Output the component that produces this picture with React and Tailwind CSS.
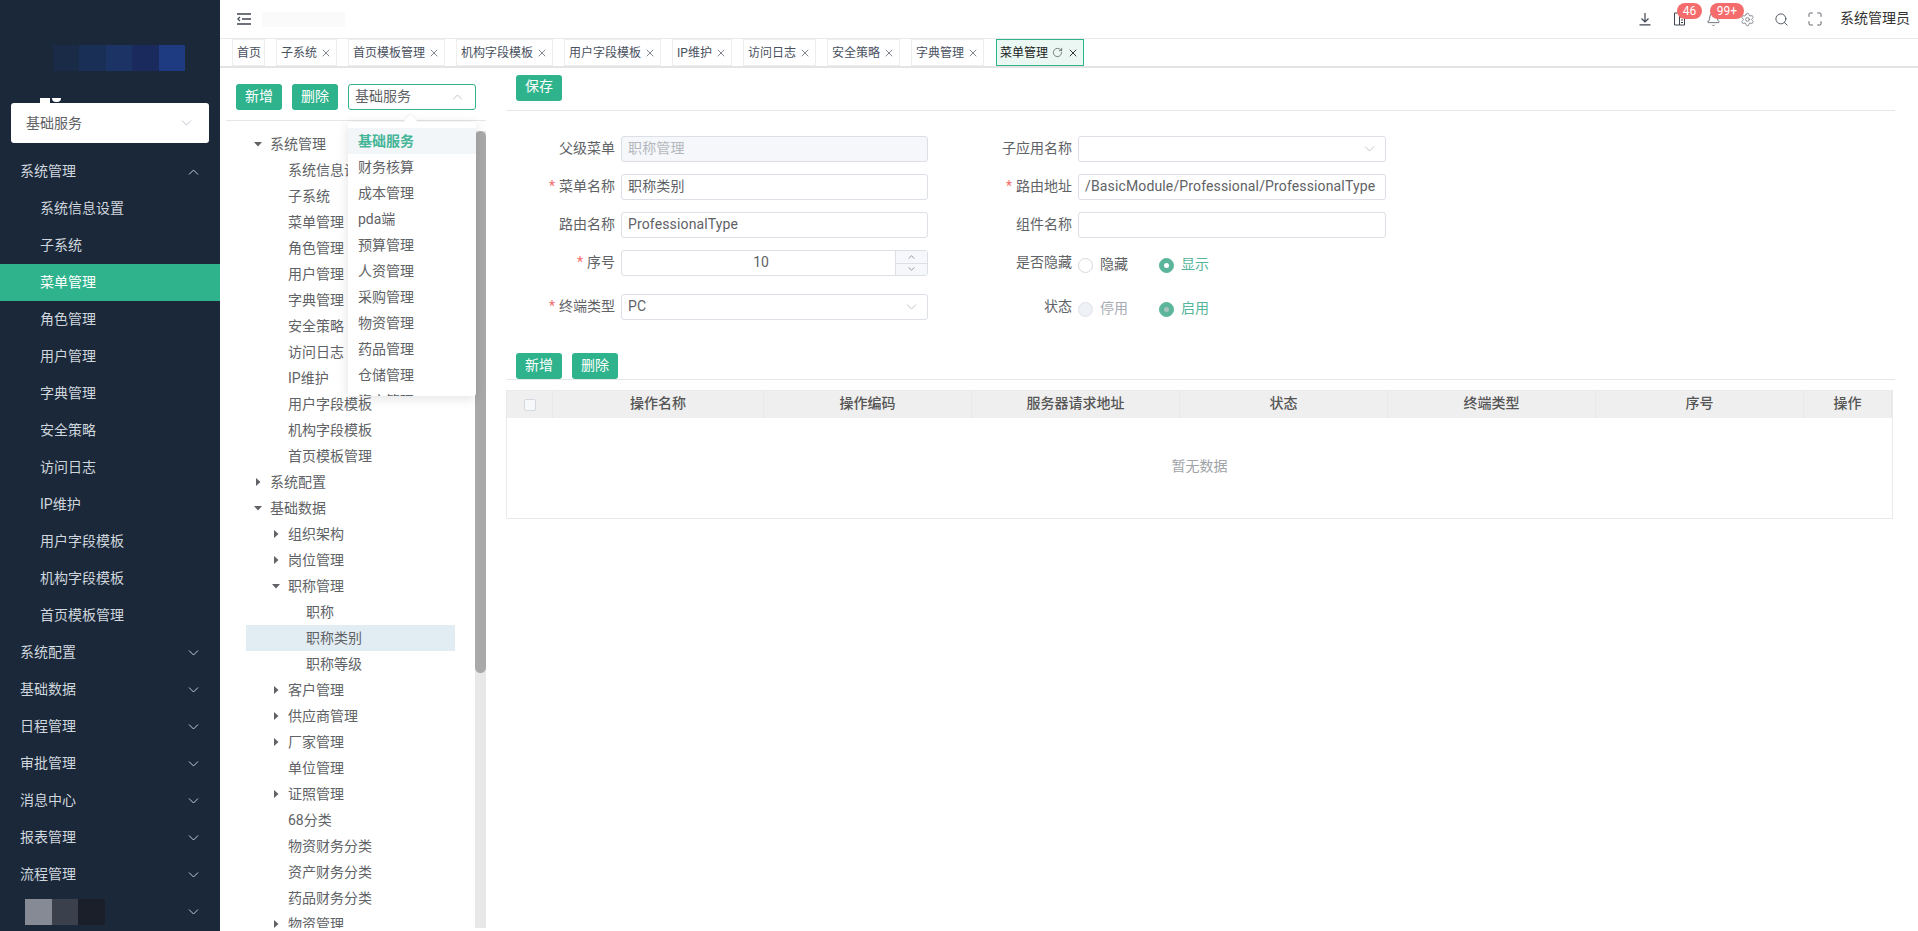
import { Bell, Maximize, RotateCw, Search, Settings, X } from "lucide-react";

const FONT = "font-['Roboto','Noto_Sans_CJK_SC',sans-serif]";

const SUB_MENUS = [
  "系统信息设置",
  "子系统",
  "菜单管理",
  "角色管理",
  "用户管理",
  "字典管理",
  "安全策略",
  "访问日志",
  "IP维护",
  "用户字段模板",
  "机构字段模板",
  "首页模板管理",
];

const GROUPS = ["系统配置", "基础数据", "日程管理", "审批管理", "消息中心", "报表管理", "流程管理"];

const TABS = [
  { label: "首页", noClose: true },
  { label: "子系统" },
  { label: "首页模板管理" },
  { label: "机构字段模板" },
  { label: "用户字段模板" },
  { label: "IP维护" },
  { label: "访问日志" },
  { label: "安全策略" },
  { label: "字典管理" },
];

const TREE = [
  { label: "系统管理", level: 1, arrow: "down" },
  { label: "系统信息设置", level: 2 },
  { label: "子系统", level: 2 },
  { label: "菜单管理", level: 2 },
  { label: "角色管理", level: 2 },
  { label: "用户管理", level: 2 },
  { label: "字典管理", level: 2 },
  { label: "安全策略", level: 2 },
  { label: "访问日志", level: 2 },
  { label: "IP维护", level: 2 },
  { label: "用户字段模板", level: 2 },
  { label: "机构字段模板", level: 2 },
  { label: "首页模板管理", level: 2 },
  { label: "系统配置", level: 1, arrow: "right" },
  { label: "基础数据", level: 1, arrow: "down" },
  { label: "组织架构", level: 2, arrow: "right" },
  { label: "岗位管理", level: 2, arrow: "right" },
  { label: "职称管理", level: 2, arrow: "down" },
  { label: "职称", level: 3 },
  { label: "职称类别", level: 3, selected: true },
  { label: "职称等级", level: 3 },
  { label: "客户管理", level: 2, arrow: "right" },
  { label: "供应商管理", level: 2, arrow: "right" },
  { label: "厂家管理", level: 2, arrow: "right" },
  { label: "单位管理", level: 2 },
  { label: "证照管理", level: 2, arrow: "right" },
  { label: "68分类", level: 2 },
  { label: "物资财务分类", level: 2 },
  { label: "资产财务分类", level: 2 },
  { label: "药品财务分类", level: 2 },
  { label: "物资管理", level: 2, arrow: "right" },
];

const OPTIONS = [
  "基础服务",
  "财务核算",
  "成本管理",
  "pda端",
  "预算管理",
  "人资管理",
  "采购管理",
  "物资管理",
  "药品管理",
  "仓储管理",
  "资产管理",
];

const COLUMNS = [
  { label: "操作名称", width: "w-[211px]" },
  { label: "操作编码", width: "w-[208px]" },
  { label: "服务器请求地址", width: "w-[208px]" },
  { label: "状态", width: "w-[208px]" },
  { label: "终端类型", width: "w-[208px]" },
  { label: "序号", width: "w-[208px]" },
  { label: "操作", width: "flex-1" },
];

const Chevron = ({ up = false, color = "#c0c4cc", className = "" }) => (
  <svg width="11" height="6" viewBox="0 0 11 6" fill="none" className={className}>
    <path d={up ? "M1 5.5 L5.5 1 L10 5.5" : "M1 .5 L5.5 5 L10 .5"} stroke={color} strokeWidth="1" />
  </svg>
);

const Arrow = ({ dir }) => (
  <svg width="8" height="8" viewBox="0 0 8 8" fill="#606266">
    <path d={dir === "down" ? "M0 2 H8 L4 6.5 Z" : "M2 0 L6.5 4 L2 8 Z"} />
  </svg>
);

const GreenButton = ({ children }) => (
  <button className="h-[26px] w-[46px] rounded-[3px] bg-[#2fb38d] text-[14px] text-white pb-[2px]">
    {children}
  </button>
);

const Sidebar = () => (
  <aside className="w-[220px] h-full shrink-0 bg-[#1a2839] overflow-hidden">
    <div className="h-[103px] pt-[45px] pl-[53px] relative">
      <div className="flex h-[26px] w-[132px]">
        <div className="flex-1 bg-[#1a2b47]" />
        <div className="flex-1 bg-[#1a2f55]" />
        <div className="flex-1 bg-[#1c3465]" />
        <div className="flex-1 bg-[#1a2a5c]" />
        <div className="flex-1 bg-[#1e3a80]" />
      </div>
      <div className="absolute left-[40px] bottom-0 flex gap-[2px]">
        <div className="h-[5px] w-[10px] bg-white" />
        <div className="h-[4px] w-[9px] rounded-b-full bg-white" />
      </div>
    </div>

    <div className="mx-[11px] h-[40px] rounded-[3px] bg-white flex items-center justify-between pl-[15px] pr-[17px] text-[14px] text-[#606266]">
      <span>基础服务</span>
      <Chevron />
    </div>

    <div className="mt-[10px] text-[14px] text-[#d0d6dd]">
      <div className="h-[37px] flex items-center justify-between pl-[20px] pr-[21px]">
        <span>系统管理</span>
        <Chevron up color="#c5ccd4" />
      </div>
      {SUB_MENUS.map((name) => (
        <div
          key={name}
          className={`h-[37px] flex items-center pl-[40px] ${
            name === "菜单管理" ? "bg-[#2fb38d] text-white" : ""
          }`}
        >
          {name}
        </div>
      ))}
      {GROUPS.map((name) => (
        <div key={name} className="h-[37px] flex items-center justify-between pl-[20px] pr-[21px]">
          <span>{name}</span>
          <Chevron color="#c5ccd4" />
        </div>
      ))}
      <div className="h-[37px] flex items-center justify-between pl-[25px] pr-[21px]">
        <div className="flex h-[26px] w-[80px]">
          <div className="flex-1 bg-[#858a95]" />
          <div className="flex-1 bg-[#3a404c]" />
          <div className="flex-1 bg-[#1a1f2a]" />
        </div>
        <Chevron color="#c5ccd4" />
      </div>
    </div>
  </aside>
);

const TopBar = () => (
  <header className="h-[39px] shrink-0 border-b border-[#e9e9e9] flex items-center pl-[17px]">
    <svg width="14" height="12" viewBox="0 0 14 12" fill="none" stroke="#3f4650" strokeWidth="1.6">
      <path d="M0 1 H14 M5 6 H14 M0 11 H14" />
      <path d="M3 4 L.8 6 L3 8" strokeWidth="1.2" />
    </svg>
    <div className="ml-[11px] h-[15px] w-[83px] bg-[#fafafa]" />

    <div className="ml-auto flex items-center pr-[8px]">
      <div className="relative flex">
        <div className="w-[34px] h-[38px] flex items-center justify-center">
          <svg width="14" height="14" viewBox="0 0 14 14" fill="none" stroke="#3f4650" strokeWidth="1.2">
            <path d="M7 1 V9.5 M3.5 6.5 L7 10 L10.5 6.5 M1.5 12.8 H12.5" />
          </svg>
        </div>
        <div className="w-[34px] h-[38px] flex items-center justify-center">
          <svg width="13" height="14" viewBox="0 0 13 14" fill="none" stroke="#3f4650" strokeWidth="1">
            <path d="M1.5 1 H6.5 V13 H1.5 Z M6.5 5 H11.5 V13 H6.5 M8 8 H10 M8 10.5 H10" />
          </svg>
        </div>
        <div className="w-[34px] h-[38px] flex items-center justify-center">
          <Bell size={15} strokeWidth={1.2} color="#3f4650" />
        </div>
        <div className="w-[34px] h-[38px] flex items-center justify-center">
          <Settings size={15} strokeWidth={1.1} color="#555c66" />
        </div>
        <div className="w-[34px] h-[38px] flex items-center justify-center">
          <Search size={15} strokeWidth={1.4} color="#3f4650" />
        </div>
        <div className="w-[34px] h-[38px] flex items-center justify-center">
          <Maximize size={16} strokeWidth={1.3} color="#3f4650" />
        </div>
        <span className="absolute left-[49px] top-[3px] h-[16px] w-[25px] rounded-full bg-[#f56c6c] text-white text-[12px] leading-[16px] text-center">
          46
        </span>
        <span className="absolute left-[82px] top-[3px] h-[16px] w-[34px] rounded-full bg-[#f56c6c] text-white text-[12px] leading-[16px] text-center">
          99+
        </span>
      </div>
      <span className="ml-[8px] text-[14px] text-[#333] pb-[2px]">系统管理员</span>
    </div>
  </header>
);

const TabBar = () => (
  <div className="h-[29px] shrink-0 border-b-2 border-[#e4e4e4] flex items-start gap-[11px] pl-[12px]">
    {TABS.map((tab) => (
      <div
        key={tab.label}
        className={`h-[27px] border border-[#eeeeee] pl-[4px] flex items-center text-[12px] text-[#495060] whitespace-nowrap ${
          tab.noClose ? "pr-[3px]" : "pr-[4px]"
        }`}
      >
        <span>{tab.label}</span>
        {!tab.noClose && <X size={12} strokeWidth={1.4} className="ml-[3px] text-[#495060]" />}
      </div>
    ))}
    <div className="ml-[1px] h-[27px] border border-[#2fb38d] bg-[#eaf7f3] pl-[3px] pr-[4px] flex items-center text-[12px] text-[#222] whitespace-nowrap">
      <span>菜单管理</span>
      <RotateCw size={11} strokeWidth={1.3} className="ml-[4px] text-[#333]" />
      <X size={12} strokeWidth={1.8} className="ml-[4px] text-[#222]" />
    </div>
  </div>
);

const TreePanel = () => (
  <div className="w-[286px] h-full shrink-0 pl-[6px] pt-[16px] relative">
    <div className="w-[260px] h-[37px] border-b border-[#e6e6e6] flex gap-[10px] pl-[10px] items-start">
      <GreenButton>新增</GreenButton>
      <GreenButton>删除</GreenButton>
      <div className="w-[128px] h-[26px] rounded-[3px] border border-[#2fb38d] flex items-center justify-between pl-[6px] pr-[12px] text-[14px] text-[#606266]">
        <span className="pb-[2px]">基础服务</span>
        <Chevron up />
      </div>
    </div>

    <div className="mt-[10px] h-[797px] flex w-[260px] pl-[20px]">
      <div className="w-[209px] overflow-hidden text-[14px] text-[#606266]">
        {TREE.map((node, i) => (
          <div
            key={i}
            className={`h-[26px] flex items-center shrink-0 ${node.selected ? "bg-[#e2ecf3]" : ""} ${
              node.level === 2 ? "pl-[18px]" : node.level === 3 ? "pl-[36px]" : ""
            }`}
          >
            <span className="w-[24px] flex justify-center">
              {node.arrow && <Arrow dir={node.arrow} />}
            </span>
            <span className="whitespace-nowrap">{node.label}</span>
          </div>
        ))}
      </div>
      <div className="ml-[20px] w-[11px] bg-[#e8e8e8]">
        <div className="h-[542px] rounded-full bg-[#a9a9a9]" />
      </div>
    </div>

    {/* Select dropdown */}
    <div className="absolute left-[128px] top-[54px] w-[128px] h-[274px] rounded-[3px] bg-white shadow-[0_2px_12px_rgba(0,0,0,0.12)] overflow-hidden pt-[6px] text-[14px] text-[#606266]">
      {OPTIONS.map((opt, i) => (
        <div
          key={opt}
          className={`h-[26px] leading-[26px] pl-[10px] ${
            i === 0 ? "bg-[#f3f6f8] text-[#45b597] font-bold" : ""
          }`}
        >
          {opt}
        </div>
      ))}
    </div>
    <div className="absolute left-[186px] top-[48px] size-[9px] rotate-45 bg-white shadow-[-1px_-1px_2px_rgba(0,0,0,0.05)]" />
  </div>
);

const FieldLabel = ({ required, width, children }) => (
  <div className={`${width} shrink-0 text-right pr-[6px] pb-[2px] text-[14px] text-[#606266] whitespace-nowrap`}>
    {required && <span className="text-[#f56c6c] mr-[4px]">*</span>}
    {children}
  </div>
);

const TextInput = ({ value, disabled, width = "w-[307px]", select }) => (
  <div
    className={`${width} h-[26px] rounded-[3px] border border-[#dcdfe6] flex items-center justify-between pl-[6px] pr-[10px] text-[14px] tracking-[0.14px] ${
      disabled ? "bg-[#f5f7fa] text-[#b4b7bd]" : "bg-white text-[#606266]"
    }`}
  >
    <span className="pb-[2px]">{value}</span>
    {select && <Chevron />}
  </div>
);

const Radio = ({ label, checked, disabled }) => (
  <div className={`flex items-center ${checked ? "text-[#55b59b]" : disabled ? "text-[#a8abb2]" : "text-[#606266]"}`}>
    <span
      className={`size-[15px] rounded-full border flex items-center justify-center ${
        checked
          ? "border-[#5bb59b] bg-[#5bb59b]"
          : disabled
            ? "border-[#dfe3e8] bg-[#eef1f5]"
            : "border-[#d5d8de] bg-white"
      }`}
    >
      {checked && (
        <span className={`size-[5px] rounded-full ${disabled ? "bg-[#a9c4bc]" : "bg-white"}`} />
      )}
    </span>
    <span className="ml-[7px] text-[14px] pb-[2px]">{label}</span>
  </div>
);

const FormPanel = () => (
  <div className="flex-1 pt-[6px] pr-[23px] min-w-0">
    <div className="h-[37px] border-b border-[#e6e6e6] pl-[10px]">
      <GreenButton>保存</GreenButton>
    </div>

    <div className="mt-[25px]">
      <div className="flex items-center h-[26px] mb-[12px]">
        <FieldLabel width="w-[115px]">父级菜单</FieldLabel>
        <TextInput value="职称管理" disabled />
        <FieldLabel width="w-[150px]">子应用名称</FieldLabel>
        <TextInput width="w-[308px]" select />
      </div>
      <div className="flex items-center h-[26px] mb-[12px]">
        <FieldLabel width="w-[115px]" required>菜单名称</FieldLabel>
        <TextInput value="职称类别" />
        <FieldLabel width="w-[150px]" required>路由地址</FieldLabel>
        <TextInput width="w-[308px]" value="/BasicModule/Professional/ProfessionalType" />
      </div>
      <div className="flex items-center h-[26px] mb-[12px]">
        <FieldLabel width="w-[115px]">路由名称</FieldLabel>
        <TextInput value="ProfessionalType" />
        <FieldLabel width="w-[150px]">组件名称</FieldLabel>
        <TextInput width="w-[308px]" />
      </div>
      <div className="flex items-center h-[26px] mb-[18px]">
        <FieldLabel width="w-[115px]" required>序号</FieldLabel>
        <div className="w-[307px] h-[26px] rounded-[3px] border border-[#dcdfe6] flex text-[14px] text-[#606266]">
          <div className="flex-1 text-center leading-[22px] pl-[5px]">10</div>
          <div className="w-[32px] flex flex-col border-l border-[#dcdfe6] bg-[#f5f7fa]">
            <div className="flex-1 flex items-center justify-center border-b border-[#dcdfe6]">
              <Chevron up color="#606266" className="w-[7px]" />
            </div>
            <div className="flex-1 flex items-center justify-center">
              <Chevron color="#606266" className="w-[7px]" />
            </div>
          </div>
        </div>
        <FieldLabel width="w-[150px]">是否隐藏</FieldLabel>
        <div className="flex gap-[31px] pt-[4px]">
          <Radio label="隐藏" />
          <Radio label="显示" checked />
        </div>
      </div>
      <div className="flex items-center h-[26px]">
        <FieldLabel width="w-[115px]" required>终端类型</FieldLabel>
        <TextInput value="PC" select />
        <FieldLabel width="w-[150px]">状态</FieldLabel>
        <div className="flex gap-[31px] pt-[5px]">
          <Radio label="停用" disabled />
          <Radio label="启用" checked disabled />
        </div>
      </div>
    </div>

    <div className="mt-[33px] h-[27px] border-b border-[#e6e6e6] flex gap-[10px] pl-[10px]">
      <GreenButton>新增</GreenButton>
      <GreenButton>删除</GreenButton>
    </div>

    <div className="mt-[10px] mr-[2px] border border-[#e8eaee] text-[14px] text-[#606266]">
      <div className="h-[27px] bg-[#efefef] flex items-center">
        <div className="w-[46px] flex justify-center border-r border-[#e8e8e8] h-full items-center">
          <span className="size-[12px] rounded-[2px] border border-[#d5d8de] bg-[#f7f8fa]" />
        </div>
        {COLUMNS.map((col) => (
          <div
            key={col.label}
            className={`${col.width} h-full flex items-center justify-center border-r border-[#e8e8e8] font-medium text-[#555] pb-[2px]`}
          >
            {col.label}
          </div>
        ))}
      </div>
      <div className="h-[100px] flex items-center justify-center text-[#a0a3a8] pb-[4px]">暂无数据</div>
    </div>
  </div>
);

export default function App() {
  return (
    <div className={`w-[1918px] h-[931px] flex overflow-hidden bg-white ${FONT}`}>
      <Sidebar />
      <div className="flex-1 min-w-0 flex flex-col">
        <TopBar />
        <TabBar />
        <div className="flex-1 flex min-h-0">
          <TreePanel />
          <FormPanel />
        </div>
      </div>
    </div>
  );
}
